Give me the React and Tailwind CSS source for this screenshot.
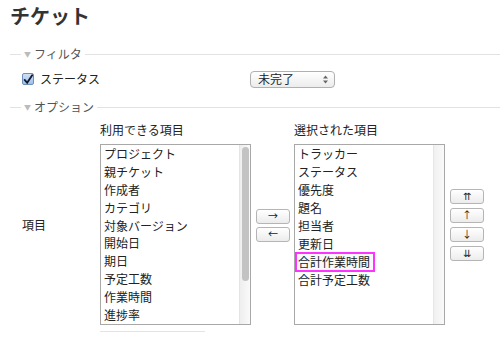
import React from "react";

const left = ["プロジェクト", "親チケット", "作成者", "カテゴリ", "対象バージョン", "開始日", "期日", "予定工数", "作業時間", "進捗率"];
const right = ["トラッカー", "ステータス", "優先度", "題名", "担当者", "更新日", "合計作業時間", "合計予定工数"];

const font = { fontFamily: '"Noto Sans CJK JP", "Noto Sans", sans-serif' };

function Legend({ label }) {
  return (
    <div className="flex items-center h-[14px]">
      <div className="w-[11px] border-t border-[#e2e2e2]" />
      <span className="ml-[3px] mr-[3px] text-[7px] text-[#bbb] leading-none">▼</span>
      <span className="text-[12px] text-[#555] leading-none">{label}</span>
      <div className="flex-1 ml-[3px] border-t border-[#e2e2e2]" />
    </div>
  );
}

function Btn({ children }) {
  return (
    <div className="w-[34px] h-[15px] rounded-[3px] border border-[#b5b5b5] bg-gradient-to-b from-white to-[#ececec] flex items-center justify-center text-[10px] leading-none text-[#222]">
      {children}
    </div>
  );
}

export default function App() {
  return (
    <div className="w-[500px] h-[337px] bg-white overflow-hidden text-[#222]" style={font}>
      <div className="pl-[10px] pt-[4px]">
        <h2 className="text-[20px] font-bold leading-[24px] text-[#333] h-[24px]">チケット</h2>
      </div>
      <div className="pl-[10px] mt-[19px]">
        <Legend label="フィルタ" />
        <div className="flex items-center h-[18px] mt-[9px] pl-[12px]">
          <div className="w-[12px] h-[12px] rounded-[2px] border border-[#6d8fb8] bg-gradient-to-b from-[#cfe0f5] to-[#9fc0e8] flex items-center justify-center">
            <svg width="11" height="11" viewBox="0 0 12 12">
              <path d="M2 6.5 L5 10 L11 1" fill="none" stroke="#111a33" strokeWidth="2.2" strokeLinecap="round" />
            </svg>
          </div>
          <span className="ml-[6px] text-[12px] leading-none w-[210px]">ステータス</span>
          <div className="w-[85px] h-[17px] rounded-[4px] border border-[#b0b0b0] bg-gradient-to-b from-white to-[#ececec] flex items-center justify-between pl-[7px] pr-[6px] text-[12px] leading-none">
            <span>未完了</span>
            <svg width="5" height="9" viewBox="0 0 5 9">
              <path d="M0 3.5 L2.5 0.5 L5 3.5 Z M0 5.5 L2.5 8.5 L5 5.5 Z" fill="#666" />
            </svg>
          </div>
        </div>
        <div className="mt-[12px]">
          <Legend label="オプション" />
        </div>
      </div>
      <div className="flex items-center pl-[22px] mt-[9px]">
        <div className="w-[78px] text-[12px] leading-none mt-[-6px]">項目</div>
        <div className="flex flex-col">
          <div className="text-[12px] leading-none h-[12px] mt-[1px]">利用できる項目</div>
          <div className="mt-[8px] w-[151px] h-[181px] border border-[#a8a8a8] flex overflow-hidden">
            <div className="flex-1 pl-[3px]">
              {left.map((t) => (
                <div key={t} className="h-[17.9px] flex items-center text-[12px] leading-none whitespace-nowrap">{t}</div>
              ))}
            </div>
            <div className="w-[11px] bg-gradient-to-r from-[#eeeeee] to-[#fafafa] border-l border-[#e4e4e4] pt-[2px] flex justify-center">
              <div className="w-[7px] h-[134px] rounded-full bg-[#c3c3c3]" />
            </div>
          </div>
          <div className="mt-[6px] w-[105px] border-t border-[#e4e4e4]" />
        </div>
        <div className="flex flex-col gap-[3px] ml-[5px] mr-[4px] mt-[-5px]">
          <Btn>→</Btn>
          <Btn>←</Btn>
        </div>
        <div className="flex flex-col self-start">
          <div className="text-[12px] leading-none h-[12px] mt-[1px]">選択された項目</div>
          <div className="mt-[8px] w-[151px] h-[181px] border border-[#a8a8a8] flex overflow-hidden">
            <div className="flex-1">
              {right.map((t) =>
                t === "合計作業時間" ? (
                  <div key={t} className="h-[18px] flex items-center">
                    <span className="border-2 border-[#ff33ff] h-[20px] pl-[1px] pr-[3px] flex items-center text-[12px] leading-none whitespace-nowrap bg-[#f8f8f8]">{t}</span>
                  </div>
                ) : (
                  <div key={t} className="h-[18px] pl-[3px] flex items-center text-[12px] leading-none whitespace-nowrap">{t}</div>
                )
              )}
            </div>
            <div className="w-[11px] bg-gradient-to-r from-[#f0f0f0] to-[#fafafa] border-l border-[#e6e6e6]" />
          </div>
        </div>
        <div className="flex flex-col gap-[4px] ml-[5px] mt-[-6px]">
          <Btn>⇈</Btn>
          <Btn>↑</Btn>
          <Btn>↓</Btn>
          <Btn>⇊</Btn>
        </div>
      </div>
    </div>
  );
}
